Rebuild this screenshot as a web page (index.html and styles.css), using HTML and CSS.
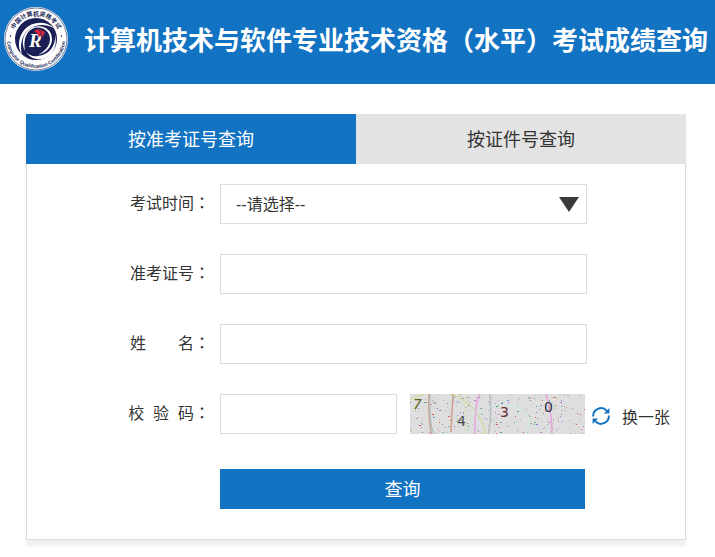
FILE: index.html
```
<!DOCTYPE html>
<html lang="zh-CN">
<head>
    <meta charset="UTF-8">
    <meta name="viewport" content="width=device-width, initial-scale=1.0">
    <title>计算机技术与软件专业技术资格（水平）考试成绩查询</title>
    <link rel="stylesheet" href="styles.css">
</head>
<body>
    <header class="header">
        <svg class="logo" viewBox="0 0 64 64" aria-hidden="true">
            <defs>
                <path id="arc-top" d="M8.5 32a23.5 23.5 0 0 1 47 0"/>
                <path id="arc-bottom" d="M3.2 27A29.2 29.2 0 1 0 60.8 27"/>
            </defs>
            <circle cx="32" cy="32" r="32" fill="#fff"/>
            <circle cx="32" cy="32" r="31" fill="none" stroke="#1a1f55" stroke-width="0.6"/>
            <circle cx="32" cy="32" r="21" fill="#1a1f55"/>
            <path d="M50 21C42 14 29 14 21 22c-7 8-8 18-3 26-2-9-1-17 5-24 7-7 17-8 27-3z" fill="#fff"/>
            <path d="M51 28c1 11-6 20-17 21-5 1-9-1-12-4 4 6 10 8 16 7 10-2 16-12 13-24z" fill="#fff"/>
            <path d="M21 44c-5-10-1-20 8-24 10-3 19 2 19 12 0 8-6 14-14 16 7-4 12-9 12-16 0-8-8-13-16-11-8 3-11 12-9 23z" fill="#fff"/>
            <text class="logo-letter" x="25" y="40">R</text>
            <path d="M30 24l4-2 3 4-2 5-2-5zM35 22l6 3-3 6-1-6z" fill="#d8263c"/>
            <circle cx="6.5" cy="29" r="0.8" fill="#1a1f55"/>
            <circle cx="57.5" cy="29" r="0.8" fill="#1a1f55"/>
            <text class="logo-cn" text-anchor="middle"><textPath href="#arc-top" startOffset="50%">中国计算机资格考试</textPath></text>
            <text class="logo-en" text-anchor="middle"><textPath href="#arc-bottom" startOffset="50%">Computer Qualification Certification</textPath></text>
        </svg>
        <h1 class="title">计算机技术与软件专业技术资格<span class="mark" lang="zh-TW">（</span>水平<span class="mark" lang="zh-TW">）</span>考试成绩查询</h1>
    </header>

    <main class="panel">
        <div class="tabs">
            <button class="tab active" type="button">按准考证号查询</button>
            <button class="tab" type="button">按证件号查询</button>
        </div>

        <form class="form">
            <div class="row">
                <label class="label" for="exam-time">考试时间<span class="mark" lang="zh-TW">：</span></label>
                <div class="select-box">
                    <select class="control" id="exam-time">
                        <option>--请选择--</option>
                    </select>
                </div>
            </div>
            <div class="row">
                <label class="label" for="ticket">准考证号<span class="mark" lang="zh-TW">：</span></label>
                <input class="control" id="ticket" type="text">
            </div>
            <div class="row">
                <label class="label" for="name">姓&emsp;&emsp;名<span class="mark" lang="zh-TW">：</span></label>
                <input class="control" id="name" type="text">
            </div>
            <div class="row">
                <label class="label" for="code">校&nbsp;&nbsp;验&nbsp;&nbsp;码<span class="mark" lang="zh-TW">：</span></label>
                <div class="code-box">
                    <input class="control code" id="code" type="text">
                    <svg class="captcha" viewBox="0 0 175 40">
                        <rect width="175" height="40" fill="#dedede"/>
                        <g id="noise"></g>
                        <g fill="none">
                            <path d="M0 6q6-4 14-6M40 0C57 5 73 20 75 40" stroke="#cfdc82"/>
                            <path d="M19 0q-1 16 2 40M43 0l-2 38" stroke="#d0a08c" stroke-width="1.5"/>
                            <path d="M20 0q-1 32 4 40M80 0q2 29-2 40" stroke="#b3bdc2" stroke-width="1.5"/>
                            <path d="M55 0v40" stroke="#e2dfbe"/>
                            <path d="M69 0q-5 19-4 40M136 0q6 19 6 40" stroke="#e6a4dc" stroke-width="1.5"/>
                            <path d="M57 40c-3-35 60-38 62-12q0 8-4 12" stroke="#c9eee0"/>
                        </g>
                        <g class="digits">
                            <text x="3" y="15" fill="#5c6019" font-style="italic">7</text>
                            <text x="47" y="32" fill="#4b4d54">4</text>
                            <text x="90" y="23" fill="#672e30">3</text>
                            <text x="134" y="18" fill="#29333f">0</text>
                        </g>
                    </svg>
                    <a class="refresh" href="#">
                        <svg class="refresh-icon" viewBox="0 0 18 18" aria-hidden="true">
                            <path d="M1.2 9.5A7.8 7.8 0 0 1 14.8 3.8M16.8 8.5A7.8 7.8 0 0 1 3.2 14.2" fill="none" stroke="#1273c3" stroke-width="2"/>
                            <path d="M17.4 1v5.6h-5.6zM.6 17v-5.6h5.6z" fill="#1273c3"/>
                        </svg>
                        <span>换一张</span>
                    </a>
                </div>
            </div>
            <div class="row submit-row">
                <button class="submit" type="button">查询</button>
            </div>
        </form>
    </main>

    <script>
        const noise = document.getElementById('noise');
        const colors = ['#d65a5a', '#4fa86a', '#7a86d0', '#c478d0', '#7ac5c5', '#d0b070', '#a0a0a0', '#e8a0c4', '#aad09a', '#c0c0c0', '#c8c8c8'];
        let seed = 37;

        function random(max) {
            seed = (seed * 16807) % 2147483647;
            return Math.floor(seed / 2147483647 * max);
        }

        for (let i = 0; i < 280; i++) {
            const dot = document.createElementNS('http://www.w3.org/2000/svg', 'rect');
            dot.setAttribute('x', random(175));
            dot.setAttribute('y', random(40));
            dot.setAttribute('width', 1 + (random(5) === 0 ? 1 : 0));
            dot.setAttribute('height', 1);
            dot.setAttribute('fill', colors[random(colors.length)]);
            noise.appendChild(dot);
        }
    </script>
</body>
</html>
```

FILE: styles.css
```
* {
    box-sizing: border-box;
}

body {
    margin: 0;
    background-color: #fff;
    color: #333;
    font-family: "Liberation Sans", "Noto Sans CJK SC", sans-serif;
    font-size: 16px;
}

button, input, select {
    font-family: inherit;
}

.header {
    display: flex;
    align-items: center;
    gap: 16px;
    height: 84px;
    padding: 0 4px 6px;
    background-color: #1273c3;
}

.logo {
    flex: none;
    width: 64px;
    height: 64px;
}

.logo text {
    fill: #1a1f55;
    font-weight: bold;
}

.logo .logo-letter {
    fill: #fff;
    font-family: "Liberation Serif", serif;
    font-size: 19px;
    font-style: italic;
}

.logo-cn {
    font-size: 6px;
}

.logo-en {
    font-size: 5px;
}

.title {
    margin: 0;
    padding-top: 4px;
    color: #fff;
    font-size: 26px;
    line-height: 36px;
    white-space: nowrap;
}

.mark {
    font-family: "Noto Sans CJK TC", sans-serif;
    line-height: 1;
}

.panel {
    margin: 30px 29px 17px 26px;
    border: 1px solid #dcdcdc;
    border-top: 0;
    box-shadow: 0 6px 4px #f0f0f0;
}

.tabs {
    display: flex;
    margin: 0 -1px;
}

.tab {
    flex: 1;
    height: 50px;
    padding: 0 0 2px;
    border: 0;
    background-color: #e3e3e3;
    color: #333;
    font-size: 18px;
    cursor: pointer;
}

.tab.active {
    background-color: #1273c3;
    color: #fff;
}

.form {
    display: flex;
    flex-direction: column;
    gap: 30px;
    padding: 20px 0 30px;
}

.row {
    display: grid;
    grid-template-columns: 183px 1fr;
    column-gap: 10px;
}

.label {
    height: 40px;
    line-height: 40px;
    text-align: right;
    white-space: nowrap;
}

.control {
    width: 100%;
    max-width: 367px;
    height: 40px;
    padding: 0 15px;
    border: 1px solid #dcdcdc;
    border-radius: 0;
    background-color: #fff;
    color: #333;
    font-size: 16px;
    outline: none;
}

select.control {
    appearance: none;
}

.select-box {
    position: relative;
    max-width: 367px;
}

.select-box::after {
    content: "";
    position: absolute;
    top: 13px;
    right: 8px;
    border: 10px solid transparent;
    border-top: 15px solid #3a3a3a;
    border-bottom: 0;
    pointer-events: none;
}

.code-box {
    display: flex;
    align-items: center;
}

.code {
    width: 177px;
}

.captcha {
    flex: none;
    width: 175px;
    height: 40px;
    margin-left: 13px;
}

.digits {
    font-family: "DejaVu Sans", sans-serif;
    font-size: 14px;
}

.refresh {
    display: flex;
    align-items: center;
    gap: 12px;
    margin: 4px 0 0 7px;
    color: #333;
    text-decoration: none;
    white-space: nowrap;
}

.refresh-icon {
    width: 18px;
    height: 18px;
}

.submit-row {
    margin-top: 5px;
}

.submit {
    grid-column: 2;
    width: 100%;
    max-width: 365px;
    height: 40px;
    padding: 0 0 2px;
    border: 0;
    background-color: #1273c3;
    color: #fff;
    font-size: 18px;
    cursor: pointer;
}
```
